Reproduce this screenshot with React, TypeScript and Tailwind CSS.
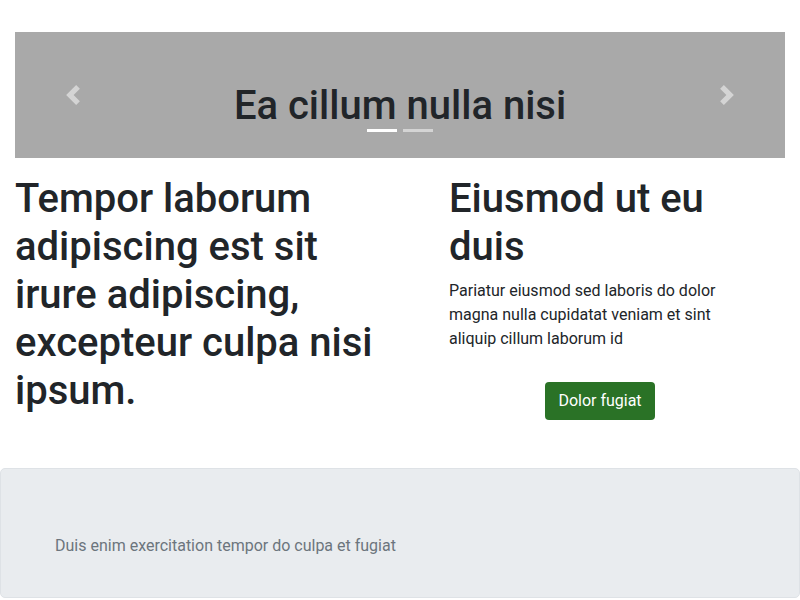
import React from "react";

function ChevronLeft() {
  return (
    <svg width="20" height="20" viewBox="0 0 8 8" fill="#fff">
      <path d="M5.25 0l-4 4 4 4 1.5-1.5L4.25 4l2.5-2.5L5.25 0z" />
    </svg>
  );
}

function ChevronRight() {
  return (
    <svg width="20" height="20" viewBox="0 0 8 8" fill="#fff">
      <path d="M2.75 0l-1.5 1.5L3.75 4l-2.5 2.5L2.75 8l4-4-4-4z" />
    </svg>
  );
}

export default function App() {
  return (
    <div className="w-[800px] h-[600px] overflow-hidden bg-white font-['Roboto',sans-serif] text-[#212529]">
      <div className="pt-8 px-[15px]">
        <div className="relative h-[126px] bg-[#a9a9a9]">
          <div className="pt-[50px]">
            <h1 className="text-center text-[40px] leading-[48px] font-medium">Ea cillum nulla nisi</h1>
          </div>
          <div className="absolute left-0 top-0 bottom-0 w-[15%] flex items-center justify-center opacity-50">
            <ChevronLeft />
          </div>
          <div className="absolute right-0 top-0 bottom-0 w-[15%] flex items-center justify-center opacity-50">
            <ChevronRight />
          </div>
          <div className="absolute left-0 right-0 bottom-[26px] flex justify-center gap-[6px]">
            <span className="block w-[30px] h-[3px] bg-white" />
            <span className="block w-[30px] h-[3px] bg-white opacity-50" />
          </div>
        </div>
      </div>

      <div className="flex h-[310px] pt-[17px]">
        <div className="ml-[15px] w-[370px]">
          <h1 className="text-[40px] leading-[48px] font-medium">
            Tempor laborum adipiscing est sit irure adipiscing, excepteur culpa nisi ipsum.
          </h1>
        </div>
        <div className="ml-[64px] w-[302px] flex flex-col">
          <h1 className="text-[40px] leading-[48px] font-medium mb-2">Eiusmod ut eu duis</h1>
          <p className="text-base leading-6">
            Pariatur eiusmod sed laboris do dolor magna nulla cupidatat veniam et sint aliquip cillum laborum id
          </p>
          <button className="mt-[31px] mx-auto w-[110px] h-[38px] rounded-[4px] bg-[#2a7226] text-white text-base leading-6">
            Dolor fugiat
          </button>
        </div>
      </div>

      <div className="h-[130px] w-full rounded-[5px] border border-[#dee2e6] bg-[#e9ecef] pl-[54px] pt-[65px]">
        <p className="text-base leading-6 text-[#6c757d]">Duis enim exercitation tempor do culpa et fugiat</p>
      </div>
    </div>
  );
}
